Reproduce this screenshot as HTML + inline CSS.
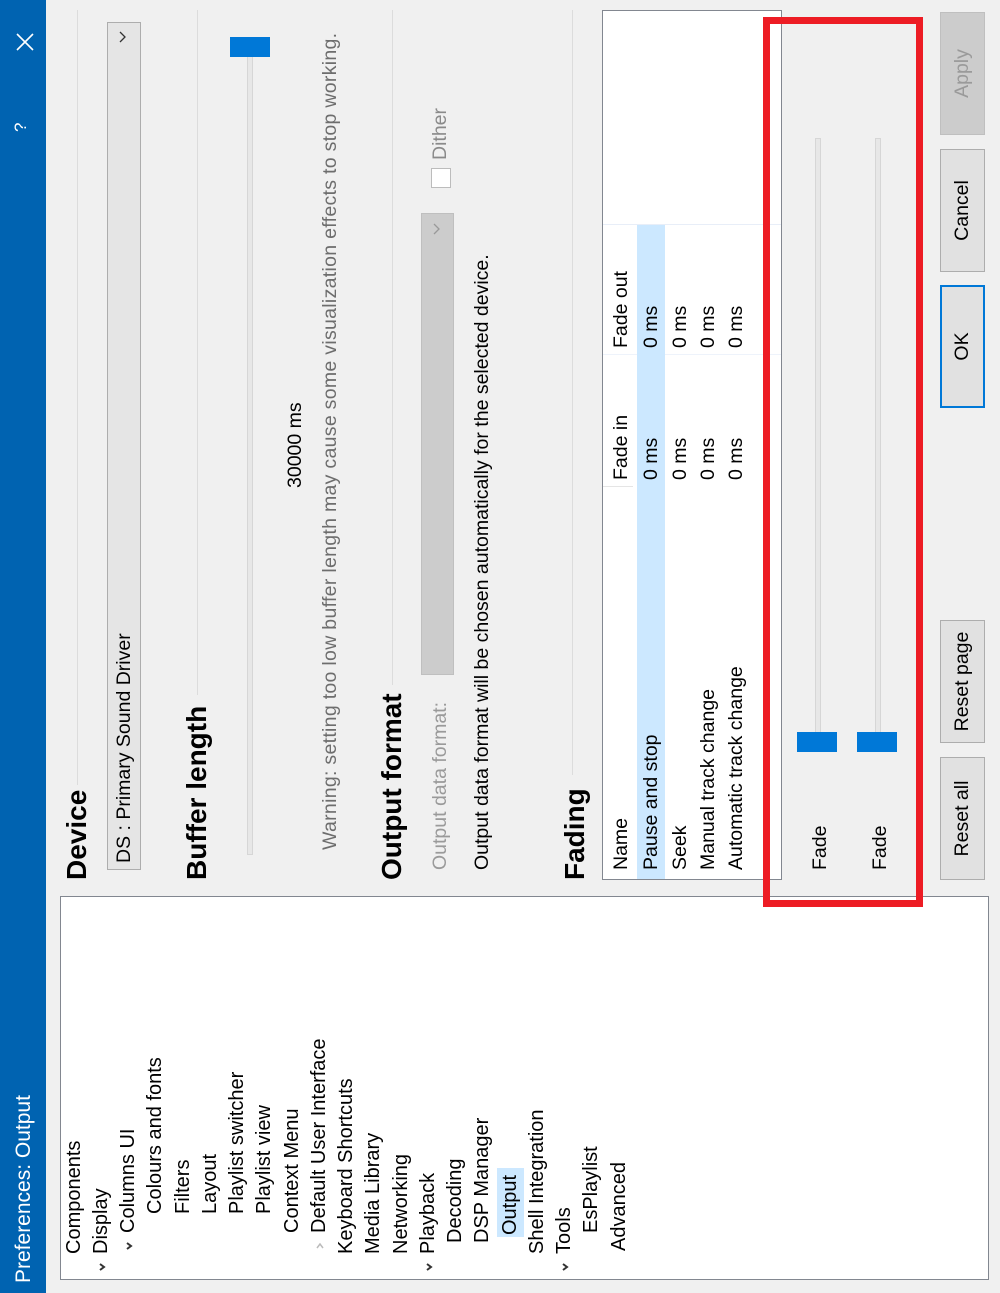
<!DOCTYPE html>
<html><head><meta charset="utf-8"><style>
html,body{margin:0;padding:0;width:1000px;height:1293px;overflow:hidden;background:#f0f0f0;font-family:"Liberation Sans",sans-serif;}
#d{position:absolute;left:0;top:0;width:1293px;height:1000px;transform-origin:0 0;transform:translate(0,1293px) rotate(-90deg);background:#f0f0f0;}
.a{position:absolute;white-space:nowrap;}
.t{font-size:19.5px;color:#000;line-height:24px;}
.h{font-size:28px;font-weight:bold;line-height:30px;}
.ln{position:absolute;height:1px;background:#dcdcdc;}
.btn{position:absolute;top:940px;height:43px;width:121px;background:#e1e1e1;border:1px solid #adadad;font-size:19.5px;line-height:43px;text-align:center;}
.trk{position:absolute;height:4px;background:#e7e7e7;border:1px solid #d6d6d6;}
.th{position:absolute;background:#0078d7;}
.ti{position:absolute;font-size:20px;line-height:27px;white-space:nowrap;}
.chev{position:absolute;width:10px;height:10px;}
</style></head><body><div id="d">
<div class="a" style="left:0;top:0;width:1293px;height:46px;background:#0063b1;"></div>
<div class="a" style="left:10px;top:10px;font-size:21px;color:#fff;line-height:28px;">Preferences: Output</div>
<div class="a" style="left:1161px;top:11px;font-size:17px;color:#fff;">?</div>
<svg class="a" style="left:1242px;top:16px" width="18" height="18"><path d="M1 1L17 17M17 1L1 17" stroke="#fff" stroke-width="1.6"/></svg>

<div class="a" style="left:13px;top:60px;width:382px;height:927px;background:#fff;border:1px solid #828790;"></div>
<div class="ti" style="left:39px;top:61px">Components</div>
<div class="ti" style="left:39px;top:88px">Display</div>
<div class="ti" style="left:60px;top:115px">Columns UI</div>
<div class="ti" style="left:79px;top:142px">Colours and fonts</div>
<div class="ti" style="left:79px;top:170px">Filters</div>
<div class="ti" style="left:79px;top:197px">Layout</div>
<div class="ti" style="left:79px;top:224px">Playlist switcher</div>
<div class="ti" style="left:79px;top:251px">Playlist view</div>
<div class="ti" style="left:60px;top:279px">Context Menu</div>
<div class="ti" style="left:60px;top:306px">Default User Interface</div>
<div class="ti" style="left:39px;top:333px">Keyboard Shortcuts</div>
<div class="ti" style="left:39px;top:360px">Media Library</div>
<div class="ti" style="left:39px;top:388px">Networking</div>
<div class="ti" style="left:39px;top:415px">Playback</div>
<div class="ti" style="left:50px;top:442px">Decoding</div>
<div class="ti" style="left:50px;top:469px">DSP Manager</div>
<div class="a" style="left:56px;top:497px;width:69px;height:27px;background:#cce8ff"></div>
<div class="ti" style="left:58px;top:497px">Output</div>
<div class="ti" style="left:39px;top:524px">Shell Integration</div>
<div class="ti" style="left:39px;top:551px">Tools</div>
<div class="ti" style="left:60px;top:578px">EsPlaylist</div>
<div class="ti" style="left:42px;top:606px">Advanced</div>
<svg class="chev" style="left:21px;top:97px"><path d="M2 3L5 7L8 3" fill="none" stroke="#333" stroke-width="2"/></svg>
<svg class="chev" style="left:42px;top:124px"><path d="M2 3L5 7L8 3" fill="none" stroke="#333" stroke-width="2"/></svg>
<svg class="chev" style="left:42px;top:315px"><path d="M3 2L7 5L3 8" fill="none" stroke="#bbb" stroke-width="1.5"/></svg>
<svg class="chev" style="left:21px;top:424px"><path d="M2 3L5 7L8 3" fill="none" stroke="#333" stroke-width="2"/></svg>
<svg class="chev" style="left:21px;top:560px"><path d="M2 3L5 7L8 3" fill="none" stroke="#333" stroke-width="2"/></svg>

<div class="a h" style="left:413px;top:62px">Device</div>
<div class="ln" style="left:508px;top:77px;width:775px"></div>
<div class="a" style="left:423px;top:107px;width:846px;height:32px;background:#e5e5e5;border:1px solid #adadad;"></div>
<div class="a t" style="left:430px;top:112px">DS : Primary Sound Driver</div>
<svg class="a" style="left:1250px;top:118px" width="12" height="10"><path d="M1 2L6 7L11 2" fill="none" stroke="#333" stroke-width="1.3"/></svg>

<div class="a h" style="left:413px;top:182px">Buffer length</div>
<div class="ln" style="left:598px;top:197px;width:685px"></div>
<div class="trk" style="left:438px;top:247px;width:798px"></div>
<div class="th" style="left:1236px;top:230px;width:20px;height:40px"></div>
<div class="a t" style="left:805px;top:283px">30000 ms</div>
<div class="a t" style="left:443px;top:318px;color:#6d6d6d;letter-spacing:0.3px">Warning: setting too low buffer length may cause some visualization effects to stop working.</div>

<div class="a h" style="left:413px;top:377px">Output format</div>
<div class="ln" style="left:608px;top:392px;width:675px"></div>
<div class="a t" style="left:423px;top:428px;color:#9a9a9a">Output data format:</div>
<div class="a" style="left:618px;top:421px;width:460px;height:31px;background:#cccccc;border:1px solid #bfbfbf;"></div>
<svg class="a" style="left:1058px;top:432px" width="12" height="10"><path d="M1 2L6 7L11 2" fill="none" stroke="#999" stroke-width="1.3"/></svg>
<div class="a" style="left:1105px;top:431px;width:18px;height:18px;background:#fff;border:1px solid #bcbcbc;"></div>
<div class="a t" style="left:1133px;top:428px;color:#8a8a8a">Dither</div>
<div class="a t" style="left:423px;top:470px">Output data format will be chosen automatically for the selected device.</div>

<div class="a h" style="left:413px;top:560px">Fading</div>
<div class="ln" style="left:518px;top:572px;width:765px"></div>
<div class="a" style="left:413px;top:602px;width:868px;height:178px;background:#fff;border:1px solid #828790;"></div>
<div class="a" style="left:806px;top:603px;width:1px;height:30px;background:#e5e5e5"></div>
<div class="a" style="left:938px;top:603px;width:1px;height:178px;background:#eef3fb"></div>
<div class="a" style="left:1068px;top:603px;width:1px;height:178px;background:#e8eef8"></div>
<div class="a" style="left:414px;top:637px;width:654px;height:28px;background:#cce8ff"></div>
<div class="a t" style="left:423px;top:609px">Name</div>
<div class="a t" style="left:813px;top:609px">Fade in</div>
<div class="a t" style="left:945px;top:609px">Fade out</div>
<div class="a t" style="left:423px;top:639px">Pause and stop</div>
<div class="a t" style="left:813px;top:639px">0 ms</div>
<div class="a t" style="left:945px;top:639px">0 ms</div>
<div class="a t" style="left:423px;top:668px">Seek</div>
<div class="a t" style="left:813px;top:668px">0 ms</div>
<div class="a t" style="left:945px;top:668px">0 ms</div>
<div class="a t" style="left:423px;top:696px">Manual track change</div>
<div class="a t" style="left:813px;top:696px">0 ms</div>
<div class="a t" style="left:945px;top:696px">0 ms</div>
<div class="a t" style="left:423px;top:724px">Automatic track change</div>
<div class="a t" style="left:813px;top:724px">0 ms</div>
<div class="a t" style="left:945px;top:724px">0 ms</div>

<div class="a" style="left:386px;top:763px;width:876px;height:146px;border:7px solid #ed1c24;"></div>
<div class="a t" style="left:423px;top:808px">Fade</div>
<div class="trk" style="left:553px;top:815px;width:600px"></div>
<div class="th" style="left:541px;top:797px;width:20px;height:40px"></div>
<div class="a t" style="left:423px;top:868px">Fade</div>
<div class="trk" style="left:553px;top:875px;width:600px"></div>
<div class="th" style="left:541px;top:857px;width:20px;height:40px"></div>

<div class="btn" style="left:413px">Reset all</div>
<div class="btn" style="left:550px">Reset page</div>
<div class="btn" style="left:885px;border:2px solid #0078d7;width:119px;height:41px;line-height:41px">OK</div>
<div class="btn" style="left:1021px">Cancel</div>
<div class="btn" style="left:1158px;background:#cccccc;border-color:#bfbfbf;color:#9a9a9a">Apply</div>
</div></body></html>
